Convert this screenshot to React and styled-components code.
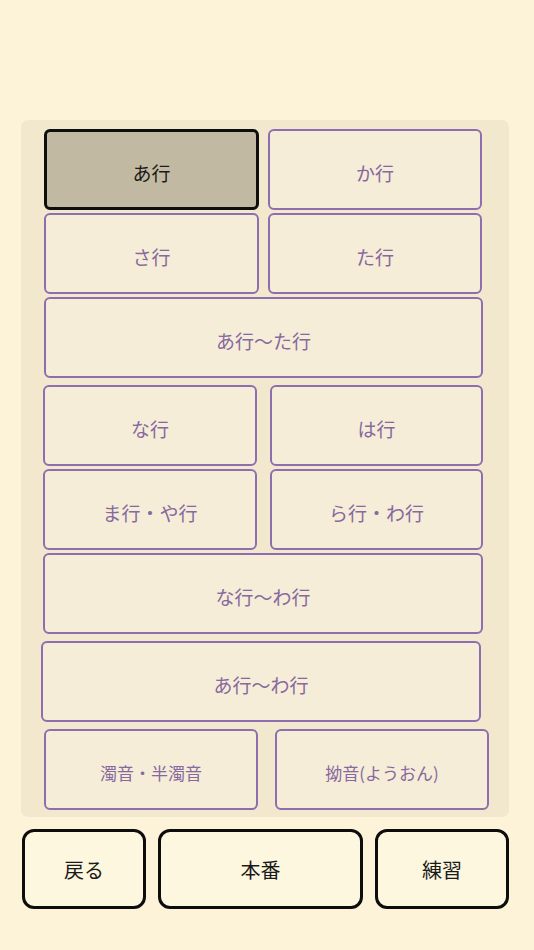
import React from 'react'
import styled, { createGlobalStyle } from 'styled-components'

const GlobalStyle = createGlobalStyle`
  html, body {
    margin: 0;
    padding: 0;
    background: #fdf3d9;
  }
  body {
    font-family: "Noto Sans CJK JP", "Noto Sans", sans-serif;
  }
`

const Page = styled.div`
  width: 534px;
  height: 950px;
  padding-top: 120px;
  box-sizing: border-box;
`

const Panel = styled.div`
  margin-left: 21px;
  width: 488px;
  padding: 9px 0 7px;
  box-sizing: border-box;
  background: #f2e8ce;
  border-radius: 7px;
  display: flex;
  flex-direction: column;
`

const Row = styled.div`
  display: flex;
  gap: ${p => p.$gap || 10}px;
  margin-top: ${p => p.$mt || 0}px;
  padding-left: ${p => p.$pl}px;
`

const RowButton = styled.button`
  width: ${p => p.$w}px;
  height: 81px;
  box-sizing: border-box;
  border-radius: 6px;
  border: ${p => (p.$active ? '3px solid #0e0e0e' : '2px solid #8f6eaf')};
  background: ${p => (p.$active ? '#c2b9a2' : '#f5edd7')};
  color: ${p => (p.$active ? '#1a1a1a' : '#87689f')};
  font-family: inherit;
  font-size: ${p => (p.$small ? 17 : 19)}px;
  padding: 5px 0 0;
  display: flex;
  align-items: center;
  justify-content: center;
  cursor: pointer;
`

const BottomBar = styled.div`
  display: flex;
  margin-top: 12px;
  padding-left: 22px;
  gap: 12px;
`

const BottomButton = styled.button`
  width: ${p => p.$w}px;
  height: 80px;
  box-sizing: border-box;
  border: 3px solid #0d0d0d;
  border-radius: 12px;
  background: #fef7e0;
  color: #1a1a1a;
  font-family: inherit;
  font-size: 20px;
  padding: 0;
  cursor: pointer;
`

const rows = [
  { mt: 0, pl: 23, gap: 9, items: [['あ行', 215, true], ['か行', 214]] },
  { mt: 3, pl: 23, gap: 9, items: [['さ行', 215], ['た行', 214]] },
  { mt: 3, pl: 23, items: [['あ行〜た行', 439]] },
  { mt: 7, pl: 22, gap: 13, items: [['な行', 214], ['は行', 213]] },
  { mt: 3, pl: 22, gap: 13, items: [['ま行・や行', 214], ['ら行・わ行', 213]] },
  { mt: 3, pl: 22, items: [['な行〜わ行', 440]] },
  { mt: 7, pl: 20, items: [['あ行〜わ行', 440]] },
  { mt: 7, pl: 23, gap: 17, small: true, items: [['濁音・半濁音', 214], ['拗音(ようおん)', 214]] },
]

export default function App() {
  return (
    <>
      <GlobalStyle />
      <Page>
        <Panel>
          {rows.map((r, i) => (
            <Row key={i} $mt={r.mt} $pl={r.pl} $gap={r.gap}>
              {r.items.map(([label, w, active]) => (
                <RowButton key={label} $w={w} $active={active} $small={r.small}>
                  {label}
                </RowButton>
              ))}
            </Row>
          ))}
        </Panel>
        <BottomBar>
          <BottomButton $w={124}>戻る</BottomButton>
          <BottomButton $w={205}>本番</BottomButton>
          <BottomButton $w={134}>練習</BottomButton>
        </BottomBar>
      </Page>
    </>
  )
}
